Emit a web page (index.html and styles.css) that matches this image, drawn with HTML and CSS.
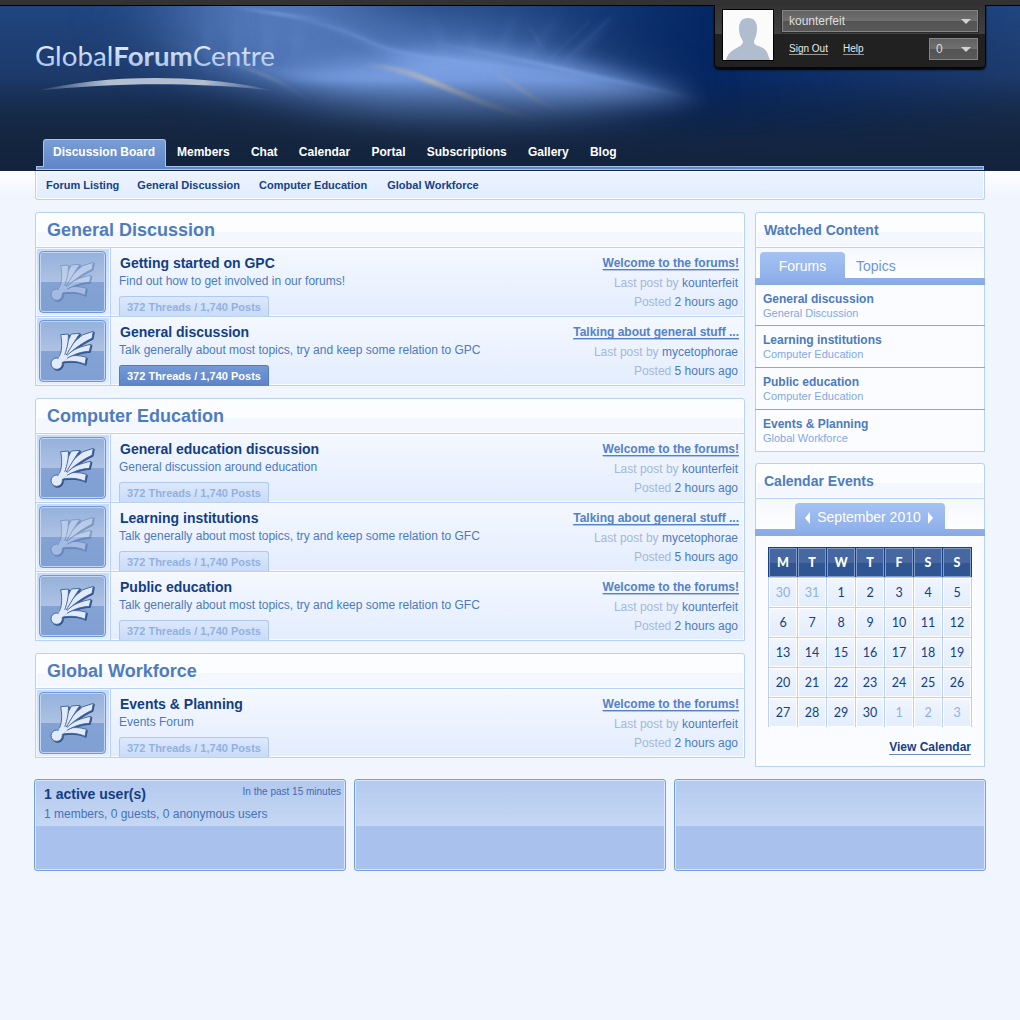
FILE: index.html
```html
<!DOCTYPE html>
<html lang="en">
<head>
<meta charset="utf-8">
<title>Global Forum Centre</title>
<link rel="stylesheet" href="styles.css">
</head>
<body>
<svg class="defs" width="0" height="0" aria-hidden="true">
  <defs>
    <symbol id="feather" viewBox="0 0 201 186">
      <g stroke="#4669a3" stroke-width="3" stroke-linejoin="round">
        <path d="M142 112L138 133C118 124 98 122 70 126L76 112C102 104 124 106 142 112Z"/>
        <path d="M156 73L151 94C128 95 104 102 76 120L76 108C102 88 128 78 156 73Z"/>
        <path d="M132 44L163 34L159 55C134 66 108 84 78 112L74 106C88 82 110 60 132 44Z"/>
        <path d="M97 42L123 40C110 58 98 78 80 108L70 106C78 84 86 62 97 42Z"/>
        <path d="M65 44L88 42C89 62 86 80 76 108L62 108C70 88 69 64 65 44Z"/>
        <circle cx="53" cy="131" r="17"/>
      </g>
      <path d="M54 124L66 102L84 106L84 116L70 126L60 134Z"/>
    </symbol>
  </defs>
</svg>

<header class="header">
  <svg class="aurora" viewBox="0 0 1020 165" preserveAspectRatio="none" color-interpolation-filters="sRGB" aria-hidden="true">
    <defs>
      <filter id="b1" filterUnits="userSpaceOnUse" x="-50" y="-50" width="1120" height="270"><feGaussianBlur stdDeviation="1.8"/></filter>
      <filter id="b3" filterUnits="userSpaceOnUse" x="-50" y="-50" width="1120" height="270"><feGaussianBlur stdDeviation="4"/></filter>
      <filter id="b8" filterUnits="userSpaceOnUse" x="-50" y="-50" width="1120" height="270"><feGaussianBlur stdDeviation="10"/></filter>
      <filter id="b25" filterUnits="userSpaceOnUse" x="-200" y="-120" width="1420" height="400"><feGaussianBlur stdDeviation="46 18"/></filter>
      <linearGradient id="gold"><stop offset="0" stop-color="#b9b9bd" stop-opacity="0"/><stop offset=".4" stop-color="#b3b4b8" stop-opacity=".9"/><stop offset="1" stop-color="#8c8f98" stop-opacity="0"/></linearGradient>
      <linearGradient id="fade"><stop offset="0" stop-color="#7fa6ea" stop-opacity="0"/><stop offset=".5" stop-color="#84a9ea"/><stop offset="1" stop-color="#6f97dc" stop-opacity="0"/></linearGradient>
      <linearGradient id="ray" gradientUnits="userSpaceOnUse" x1="0" y1="0" x2="0" y2="75"><stop offset="0" stop-color="#7fa4e4" stop-opacity="0"/><stop offset=".5" stop-color="#7fa4e4"/><stop offset="1" stop-color="#7fa4e4" stop-opacity="0"/></linearGradient>
      <linearGradient id="night" x2="0" y2="1"><stop offset=".45" stop-color="#14253f" stop-opacity="0"/><stop offset=".84" stop-color="#14253f" stop-opacity=".9"/><stop offset="1" stop-color="#13233d"/></linearGradient>
      <linearGradient id="deep"><stop offset="0" stop-color="#002668" stop-opacity="0"/><stop offset=".42" stop-color="#00225f"/><stop offset="1" stop-color="#002668" stop-opacity="0"/></linearGradient>
    </defs>
    <rect x="480" width="540" height="165" fill="url(#deep)" opacity=".85"/>
    <g filter="url(#b25)">
      <ellipse cx="270" cy="10" rx="95" ry="60" fill="#587ebf" opacity=".9"/>
      <ellipse cx="350" cy="50" rx="150" ry="44" fill="#5479bb" opacity=".85"/>
      <ellipse cx="480" cy="40" rx="100" ry="34" fill="#4a74b8" opacity=".5"/>
      <ellipse cx="470" cy="90" rx="170" ry="36" fill="#5f86c8" opacity=".9"/>
    </g>
    <g filter="url(#b8)">
      <path d="M270 66C350 60 400 48 470 46C540 44 600 66 700 94C620 98 540 96 500 90C420 80 340 86 270 66Z" fill="#7fa4e8" opacity=".72"/>
      <ellipse cx="450" cy="56" rx="60" ry="11" fill="#86acf0" opacity=".5"/>
    </g>
    <g fill="none" filter="url(#b3)">
      <path d="M250 0C320 12 340 22 380 42S520 60 720 98" stroke="url(#fade)" stroke-width="7" opacity=".6"/>
      <path d="M150 28C230 60 290 76 370 70S470 54 560 66" stroke="url(#fade)" stroke-width="8" opacity=".45"/>
      <path d="M310 104C345 86 370 77 400 73S500 76 600 108" stroke="url(#fade)" stroke-width="6" opacity=".3"/>
      <path d="M470 25L475 50M425 -5L445 48M520 -5L500 48M565 0L525 55M620 5L560 62M205 -5L210 70M265 -5L270 70M235 -5L238 70M300 0L295 60" stroke="url(#ray)" stroke-width="7" opacity=".15"/>
    </g>
    <g fill="none" filter="url(#b1)">
      <path d="M215 -2C270 8 320 12 370 36S520 54 700 92" stroke="url(#fade)" stroke-width="3" opacity=".5"/>
      <path d="M430 36C480 46 540 56 690 92" stroke="url(#fade)" stroke-width="4" opacity=".6"/>
      <path d="M230 0C260 6 290 10 330 14" stroke="url(#fade)" stroke-width="3" opacity=".6"/>
      <path d="M610 12L560 60M590 15L548 55M530 22L545 45" stroke="#6f97dc" stroke-width="1.5" opacity=".18"/>
      <path d="M362 59C425 62 440 88 540 114" stroke="url(#gold)" stroke-width="5.500"/>
      <path d="M490 66C520 78 530 96 570 108" stroke="url(#gold)" stroke-width="4" opacity=".4"/>
      <path d="M228 56C260 66 290 78 318 102" stroke="url(#gold)" stroke-width="3" opacity=".35"/>
    </g>
    <rect width="1020" height="165" fill="url(#night)"/>
  </svg>

  <div class="masthead">
    <svg class="logo" width="260" height="60" viewBox="0 0 260 60" role="img" aria-label="GlobalForumCentre">
      <defs>
        <linearGradient id="lg" x1="0" y1="12" x2="0" y2="36" gradientUnits="userSpaceOnUse"><stop offset="0" stop-color="#dde8fb"/><stop offset="1" stop-color="#a0bde8"/></linearGradient>
        <linearGradient id="arc"><stop offset="0" stop-color="#b9c6da" stop-opacity="0"/><stop offset=".3" stop-color="#b3bfd1"/><stop offset=".7" stop-color="#b3bfd1"/><stop offset="1" stop-color="#b9c6da" stop-opacity="0"/></linearGradient>
      </defs>
      <text class="logo-text" x="0" y="31" textLength="240" lengthAdjust="spacingAndGlyphs" fill="url(#lg)">Global<tspan class="logo-strong">Forum</tspan>Centre</text>
      <path d="M1 56C70 38.500 170 38.500 240 56C170 47 80 47 1 56Z" fill="url(#arc)"/>
    </svg>
    <section class="user">
      <div class="avatar"><svg width="50" height="50" viewBox="0 0 50 50"><path d="M25 8C31 8 34 12 34 18C34 25 32 28 31 31C31 36 34 35 40 38C45 41 45 46 47 50H3C4 45 8 41 12 39C17 36 20 35 20 31C17 27 16 23 16 18C16 12 19 8 25 8Z" fill="#afbdce"/></svg></div>
      <div class="user-side">
        <div class="select">kounterfeit<i class="caret"></i></div>
        <div class="user-row"><a>Sign Out</a><a>Help</a><div class="select small">0<i class="caret"></i></div></div>
      </div>
    </section>
  </div>
  <nav class="tabs"><a class="active">Discussion Board</a><a>Members</a><a>Chat</a><a>Calendar</a><a>Portal</a><a>Subscriptions</a><a>Gallery</a><a>Blog</a></nav>
  <div class="tabline"></div>
</header>

<div class="wash">
  <nav class="subnav"><a>Forum Listing</a><a>General Discussion</a><a>Computer Education</a><a>Global Workforce</a></nav>
</div>

<div class="layout">
  <main class="main">
    <section class="box">
      <h2>General Discussion</h2>
      <article class="row read"><div class="icon"><span><svg><use href="#feather"/></svg></span></div>
        <div class="info"><h3>Getting started on GPC</h3><p>Find out how to get involved in our forums!</p><b class="chip">372 Threads / 1,740 Posts</b></div>
        <div class="last"><div><a>Welcome to the forums!</a></div><div>Last post by <em>kounterfeit</em></div><div>Posted <em>2 hours ago</em></div></div></article>
      <article class="row"><div class="icon"><span><svg><use href="#feather"/></svg></span></div>
        <div class="info"><h3>General discussion</h3><p>Talk generally about most topics, try and keep some relation to GPC</p><b class="chip dark">372 Threads / 1,740 Posts</b></div>
        <div class="last"><div><a>Talking about general stuff ...</a></div><div>Last post by <em>mycetophorae</em></div><div>Posted <em>5 hours ago</em></div></div></article>
    </section>
    <section class="box">
      <h2>Computer Education</h2>
      <article class="row"><div class="icon"><span><svg><use href="#feather"/></svg></span></div>
        <div class="info"><h3>General education discussion</h3><p>General discussion around education</p><b class="chip">372 Threads / 1,740 Posts</b></div>
        <div class="last"><div><a>Welcome to the forums!</a></div><div>Last post by <em>kounterfeit</em></div><div>Posted <em>2 hours ago</em></div></div></article>
      <article class="row read"><div class="icon"><span><svg><use href="#feather"/></svg></span></div>
        <div class="info"><h3>Learning institutions</h3><p>Talk generally about most topics, try and keep some relation to GFC</p><b class="chip">372 Threads / 1,740 Posts</b></div>
        <div class="last"><div><a>Talking about general stuff ...</a></div><div>Last post by <em>mycetophorae</em></div><div>Posted <em>5 hours ago</em></div></div></article>
      <article class="row"><div class="icon"><span><svg><use href="#feather"/></svg></span></div>
        <div class="info"><h3>Public education</h3><p>Talk generally about most topics, try and keep some relation to GFC</p><b class="chip">372 Threads / 1,740 Posts</b></div>
        <div class="last"><div><a>Welcome to the forums!</a></div><div>Last post by <em>kounterfeit</em></div><div>Posted <em>2 hours ago</em></div></div></article>
    </section>
    <section class="box">
      <h2>Global Workforce</h2>
      <article class="row"><div class="icon"><span><svg><use href="#feather"/></svg></span></div>
        <div class="info"><h3>Events &amp; Planning</h3><p>Events Forum</p><b class="chip">372 Threads / 1,740 Posts</b></div>
        <div class="last"><div><a>Welcome to the forums!</a></div><div>Last post by <em>kounterfeit</em></div><div>Posted <em>2 hours ago</em></div></div></article>
    </section>
  </main>

  <aside class="side">
    <section class="box">
      <h2>Watched Content</h2>
      <div class="switch"><a class="on">Forums</a><a>Topics</a></div>
      <ul class="watched">
        <li><b>General discussion</b><small>General Discussion</small></li>
        <li><b>Learning institutions</b><small>Computer Education</small></li>
        <li><b>Public education</b><small>Computer Education</small></li>
        <li><b>Events &amp; Planning</b><small>Global Workforce</small></li>
      </ul>
    </section>
    <section class="box">
      <h2>Calendar Events</h2>
      <div class="switch month"><a class="on"><i class="prev"></i>September 2010<i class="next"></i></a></div>
      <div class="calendar">
        <div class="days"><b>M</b><b>T</b><b>W</b><b>T</b><b>F</b><b>S</b><b>S</b></div>
        <div class="week"><span class="off">30</span><span class="off">31</span><span>1</span><span>2</span><span>3</span><span>4</span><span>5</span></div>
        <div class="week"><span>6</span><span>7</span><span>8</span><span>9</span><span>10</span><span>11</span><span>12</span></div>
        <div class="week"><span>13</span><span>14</span><span>15</span><span>16</span><span>17</span><span>18</span><span>19</span></div>
        <div class="week"><span>20</span><span>21</span><span>22</span><span>23</span><span>24</span><span>25</span><span>26</span></div>
        <div class="week"><span>27</span><span>28</span><span>29</span><span>30</span><span class="off">1</span><span class="off">2</span><span class="off">3</span></div>
        <a class="view">View Calendar</a>
      </div>
    </section>
  </aside>
</div>

<footer class="stats">
  <section><div class="stats-head"><h3>1 active user(s)</h3><small>In the past 15 minutes</small></div><p>1 members, 0 guests, 0 anonymous users</p></section>
  <section></section>
  <section></section>
</footer>
</body>
</html>
```
FILE: styles.css
```css
* { box-sizing: border-box; }
body {
  margin: 0;
  min-height: 1020px;
  background: #f0f5fe;
  font: 12px "Liberation Sans", Arial, sans-serif;
  color: #4c7ac2;
}
h2, h3, p, ul { margin: 0; padding: 0; }
em, i { font-style: normal; }
.defs { display: block; }

/* Header */
.header {
  position: relative;
  height: 171px;
  border-top: 5px solid #323232;
  background: linear-gradient(#204580, #1d3b6c 40%, #14253f 85%, #13233c);
}
.header::before { content: ""; display: block; height: 1px; background: #000; }
.aurora { position: absolute; left: 0; top: 1px; width: 1020px; height: 165px; }
.masthead {
  position: relative;
  display: flex;
  justify-content: space-between;
  align-items: flex-start;
  height: 133px;
  padding: 0 34px 0 35px;
}
.logo { margin-top: 29px; overflow: visible; }
.logo-text { font: 400 27px "Lato", sans-serif; }
.logo-strong { font-weight: 700; }
.user {
  display: flex;
  width: 272px;
  height: 64px;
  margin-top: -1px;
  padding: 4px 7px 0 7px;
  border: solid #060606;
  border-width: 0 1px 2px;
  border-radius: 0 0 5px 5px;
  background: linear-gradient(#333, #404040 29px, #212121 29px);
  box-shadow: 0 1px 2px #000;
}
.avatar { width: 52px; height: 52px; border: 1px solid #000; background: #fbfbfb; }
.avatar svg { display: block; }
.user-side { width: 197px; margin-left: 7px; }
.select {
  display: flex;
  align-items: center;
  justify-content: space-between;
  height: 22px;
  margin: 1px 0 0 1px;
  padding: 0 6px;
  border: 1px solid #858585;
  outline: 1px solid #2c2c2c;
  background: linear-gradient(#626262, #717171 52%, #545454 52%, #595959);
  color: #ddd;
}
.caret { border: solid transparent; border-width: 5px 5px 0; border-top-color: #d2d2d2; }
.user-row { display: flex; align-items: flex-start; margin-top: 6px; padding-left: 8px; }
.user-row a {
  margin: 5px 15px 0 0;
  border-bottom: 1px solid #999;
  font-size: 10px;
  line-height: 11px;
  color: #e8e8e8;
}
.select.small { width: 49px; height: 22px; margin: 0 0 0 auto; outline: 0; }
.tabs {
  position: relative;
  display: flex;
  height: 28px;
  padding-left: 43px;
}
.tabs a {
  margin-right: 21.25px;
  line-height: 26px;
  font-weight: bold;
  color: #fff;
}
.tabs .active {
  z-index: 1;
  width: 123px;
  height: 28px;
  margin-right: 11px;
  padding: 0 0 0 9px;
  border: 1px solid #a9c2ec;
  border-bottom: 0;
  border-radius: 3px 3px 0 0;
  background: linear-gradient(#7a9dd6, #5f87c8);
  line-height: 25px;
}
.tabline {
  position: relative;
  height: 4px;
  margin: -1px 36px 0;
  border: 1px solid #a9c2ec;
  background: #5f87c8;
}
.wash { height: 41px; padding: 0 35px; background: linear-gradient(#fff, #f0f5fe 25px); }
.subnav {
  display: flex;
  height: 29px;
  padding: 0 10px;
  border: 1px solid #bcd1f5;
  border-top: 0;
  border-radius: 0 0 3px 3px;
  background: linear-gradient(#edf3fe, #e1edfd);
  box-shadow: inset 0 0 0 1px #fafcff;
}
.subnav a { margin-right: 18px; font: bold 11px/28px "Liberation Sans", Arial, sans-serif; color: #15418a; }
.subnav a:nth-child(2) { margin-right: 19px; }
.subnav a:nth-child(3) { margin-right: 20px; }

/* Columns */
.layout { display: grid; grid-template-columns: 710px 230px; gap: 10px; padding: 0 35px; align-items: start; }
.main { display: grid; gap: 12px; }
.side { display: grid; gap: 11px; }
.box h2 {
  height: 36px;
  padding-left: 11px;
  border: 1px solid #b8d1f8;
  border-radius: 3px 3px 0 0;
  background: linear-gradient(#fcfdff 55%, #f4f7fd 55%);
  box-shadow: inset 0 0 0 1px #fdfeff;
  font-size: 18px;
  line-height: 34px;
  color: #4e7cc1;
}
.side h2 { padding-left: 8px; font-size: 14px; line-height: 35px; }
.row {
  display: grid;
  grid-template-columns: 75px 1fr auto;
  height: 69px;
  border: 1px solid #b8d1f8;
  border-top: 0;
  background: linear-gradient(#f4f8ff, #e3edfe);
  box-shadow: inset 0 0 0 1px #fafcff;
}
.icon {
  height: 68px;
  padding: 3px;
  border-right: 1px solid #b8d1f8;
  background: linear-gradient(#c6dafa, #e5eefd);
  box-shadow: inset 0 0 0 1px #f3f7ff;
}
.icon span {
  display: block;
  width: 67px;
  height: 62px;
  border: 1px solid #6b98df;
  border-radius: 4px;
  background: linear-gradient(#95b1db, #aec2e3 50%, #84a3d4 50%, #809fd2);
  box-shadow: inset 0 0 0 1px #c3d5f1;
}
.icon svg {
  display: block;
  width: 67px;
  height: 62px;
  margin: -1px;
  fill: #e2ebfb;
  filter: drop-shadow(1px 1px .7px #2f528b);
}
.read .icon svg { opacity: .35; }
.info { padding: 6px 0 0 8px; }
.info h3 { padding-left: 1px; font-size: 14px; line-height: 18px; color: #133d86; }
.info p { line-height: 18px; }
.chip {
  display: block;
  width: 150px;
  height: 20px;
  margin-top: 6px;
  padding-left: 7px;
  border: 1px solid #b2c9ef;
  border-bottom: 0;
  border-radius: 3px 3px 0 0;
  background: linear-gradient(#dce8fc, #c9dbf8);
  font-size: 11px;
  line-height: 20px;
  color: #92b1e2;
}
.chip.dark { height: 21px; margin-bottom: -1px; border-color: #4f7dc5; background: linear-gradient(#7499d6, #5b84c7); color: #fff; }
.last { padding: 5px 6px 0 0; text-align: right; line-height: 19px; color: #a3b8da; }
.last div:first-child { height: 21px; margin-right: -1px; line-height: 20px; }
.last a { font-weight: bold; color: #5581c8; text-decoration: underline 1px; text-underline-offset: 2px; text-decoration-skip-ink: none; border-bottom: 1px solid #a9c3ec; }
.last em { color: #4c7ac2; }

/* Sidebar */
.switch {
  display: flex;
  height: 37px;
  padding: 4px 0 0 5px;
  background:
    linear-gradient(#8db0ec, #88a9e2) bottom / 100% 7px no-repeat,
    linear-gradient(#b8d1f8, #b8d1f8) left / 1px 100% no-repeat,
    linear-gradient(#b8d1f8, #b8d1f8) right / 1px 100% no-repeat,
    linear-gradient(#f5f8fe, #fff);
}
.switch a { padding: 0 11px; font-size: 14px; line-height: 29px; color: #6e97db; }
.switch .on {
  display: flex;
  width: 85px;
  height: 27px;
  justify-content: center;
  align-items: center;
  padding: 2px 0 0;
  border-radius: 4px 4px 0 0;
  background: linear-gradient(#a5c2f3, #8fb0ea);
  color: #fff;
}
.month { padding-left: 40px; }
.month .on { width: 150px; padding-right: 2px; gap: 7px; }
.prev, .next { border: 6px solid transparent; }
.prev { border-left: 0; border-right: 5px solid #fff; }
.next { border-right: 0; border-left: 5px solid #fff; }
.watched { list-style: none; border: 1px solid #b8d1f8; border-top: 0; background: #fafcff; }
.watched li { height: 42px; margin: 0 -1px; padding: 6px 8px 0; border-bottom: 1px solid #80a9e9; }
.watched li:first-child { height: 41px; }
.watched li:last-child { height: 41px; border: 0; }
.watched b { display: block; line-height: 16px; color: #4c7ac0; }
.watched small { display: block; font-size: 11px; line-height: 12px; color: #83a8e8; }
.calendar {
  display: flex;
  flex-direction: column;
  height: 231px;
  padding: 11px 12px 0;
  border: 1px solid #b8d1f8;
  border-top: 0;
  background: #fafcff;
}
.days, .week { display: grid; grid-template-columns: repeat(7, 28px); gap: 1px; height: 30px; padding: 1px; }
.days { background: #173f85; font: bold 12.5px/28px "Lato", sans-serif; color: #fff; text-align: center; }
.days b { border: 1px solid #7f9cc9; line-height: 27px; background: linear-gradient(#4667a0 50%, #2f5593 50%); }
.week { background: #b9d1f7; font: 12.5px/30px "Lato", sans-serif; color: #143f83; text-align: center; }
.week span { border: 1px solid #fff; line-height: 27px; background: linear-gradient(#f0f5fe, #e3edfc); }
.week .off { color: #8fb0e6; }
.view {
  align-self: flex-end;
  margin: 13px 1px 0 0;
  border-bottom: 1px solid #6c8bbd;
  font-weight: bold;
  line-height: 14px;
  color: #143f85;
}

/* Statistics */
.stats { display: grid; grid-template-columns: repeat(3, 312px); gap: 8px; padding: 12px 34px 0; }
.stats section {
  height: 92px;
  padding: 5px 4px 0 9px;
  border: 1px solid #73a0e2;
  border-radius: 3px;
  background: linear-gradient(#b3c9ee, #c5d7f3 46px, #a8c2ed 46px);
  box-shadow: inset 0 0 0 1px #d9e6fb;
}
.stats-head { display: flex; justify-content: space-between; }
.stats h3 { font-size: 14px; line-height: 18px; color: #133d86; }
.stats small { font-size: 10px; line-height: 13px; color: #3e6cb8; }
.stats p { margin-top: 2px; line-height: 18px; color: #4472bb; }
```
